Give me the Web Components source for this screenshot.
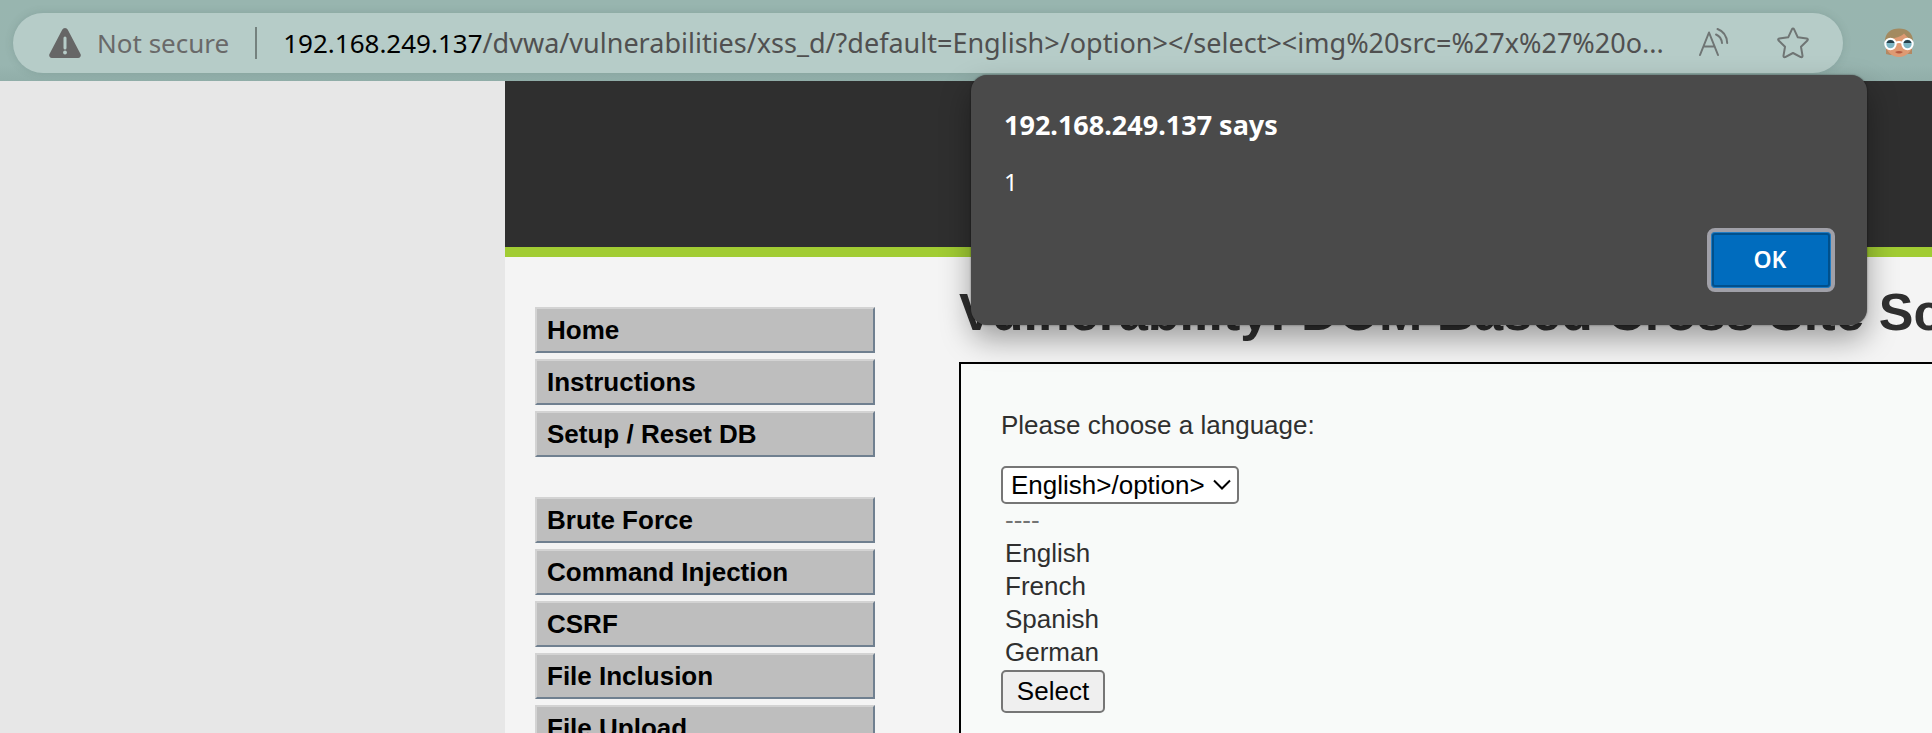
<!DOCTYPE html>
<html lang="en">
<head>
<meta charset="utf-8">
<title>Vulnerability: DOM Based Cross Site Scripting (XSS)</title>
<style>
html, body { height: 100%; }
body { margin: 0; overflow: hidden; background: #e7e7e7; font-family: "Liberation Sans", Arial, sans-serif; font-size: 26px; color: #2f2f2f; }
</style>
</head>
<body>
<browser-window>
  <address-bar slot="bar">
    <span slot="status">Not secure</span>
    <span slot="host">192.168.249.137</span>
    <span slot="path">/dvwa/vulnerabilities/xss_d/?default=English&gt;/option&gt;&lt;/select&gt;&lt;img%20src=%27x%27%20o...</span>
  </address-bar>
  <dvwa-page>
    <nav-group slot="nav">
      <nav-item>Home</nav-item>
      <nav-item>Instructions</nav-item>
      <nav-item>Setup / Reset DB</nav-item>
    </nav-group>
    <nav-group slot="nav">
      <nav-item>Brute Force</nav-item>
      <nav-item>Command Injection</nav-item>
      <nav-item>CSRF</nav-item>
      <nav-item>File Inclusion</nav-item>
      <nav-item>File Upload</nav-item>
    </nav-group>
    <span slot="title">Vulnerability: DOM Based Cross Site Scripting (XSS)</span>
    <language-form></language-form>
  </dvwa-page>
  <alert-box slot="dialog">
    <span slot="title">192.168.249.137 says</span>
    <span>1</span>
  </alert-box>
</browser-window>

<script>
function define(name, html) {
  const template = document.createElement('template');
  template.innerHTML = html;
  customElements.define(name, class extends HTMLElement {
    constructor() {
      super();
      this.attachShadow({ mode: 'open' }).append(template.content.cloneNode(true));
    }
  });
}

define('browser-window', `
<style>
:host { display: flex; flex-direction: column; height: 100%; position: relative; overflow: hidden; }
main { flex: 1; min-height: 0; overflow: hidden; display: flex; }
/* The alert floats over both the toolbar and the page. */
.float { position: absolute; top: 75px; right: 65px; }
</style>
<slot name="bar"></slot>
<main><slot></slot></main>
<div class="float"><slot name="dialog"></slot></div>`);

define('address-bar', `
<style>
:host { display: flex; align-items: center; box-sizing: border-box; flex: none; height: 81px; padding: 5px 17px 0 13px; gap: 40px;
  background: linear-gradient(#98b5af, #98b5b0 80%, #91aea9); font-family: "Noto Sans", sans-serif; font-size: 26px; line-height: 36px; white-space: nowrap; }
.pill { flex: 1; min-width: 0; height: 60px; border-radius: 30px; background: #b6ccc8; display: flex; align-items: center; box-sizing: border-box;
  padding: 0 33px 0 36px; box-shadow: 0 0 8px rgba(60,90,85,.18); }
.status { color: #696969; margin-left: 16px; }
.bar { width: 2px; height: 32px; background: #74817e; margin: 0 26px; }
.url { flex: 1; min-width: 0; overflow: hidden; color: #505050; font-size: 27px; }
.host { color: #000; font-size: 26px; }
button { all: unset; display: block; flex: none; height: 32px; }
svg { display: block; }
.read { margin-right: 46px; }
</style>
<div class="pill">
  <svg width="32" height="32" viewBox="0 0 32 32" aria-hidden="true"><path d="M13.2 2.7a3.1 3.1 0 0 1 5.6 0L31.5 27.1A2.7 2.7 0 0 1 29 31H3a2.7 2.7 0 0 1-2.500-3.900z" fill="#666"/><path d="M16 11v10" stroke="#b6ccc8" stroke-width="3" stroke-linecap="round"/><circle cx="16" cy="25.500" r="1.900" fill="#b6ccc8"/></svg>
  <span class="status"><slot name="status"></slot></span>
  <span class="bar"></span>
  <div class="url" role="textbox" aria-label="Address"><span class="host"><slot name="host"></slot></span><slot name="path"></slot></div>
  <button class="read" aria-label="Read aloud"><svg width="32" height="32" viewBox="0 0 32 32" fill="none" stroke="#6f7574" stroke-width="2" stroke-linecap="round" stroke-linejoin="round"><path d="M2 28 11 5.500 20 28M5.500 19.500h11.200M18 7.500c3.300 1.300 5.500 4.300 6 8.500M19.500 2c5.600 2 9.300 7.300 9.700 14"/></svg></button>
  <button aria-label="Add to favorites"><svg width="34" height="32" viewBox="0 0 34 32" fill="none" stroke="#6f7574" stroke-width="2" stroke-linejoin="round"><path d="M15.900 2.300q1.100-1.800 2.200 0l3.700 8 8.900 1.200q1.900.5.700 2l-6.400 6.300 1.500 8.800q.1 2-1.700 1.500L17 26l-7.800 4.100q-1.800.5-1.700-1.500L9 19.800l-6.400-6.300q-1.200-1.500.7-2l8.900-1.200z"/></svg></button>
</div>
<button aria-label="Profile"><svg width="32" height="32" viewBox="0 0 32 32">
  <path d="M3 14h26v13h-4l-18 1-4-1z" fill="#b38862"/>
  <circle cx="16" cy="16.500" r="13.500" fill="#de9a73"/>
  <path d="M2 14C2 6 8 1.500 16 1.500S30 6 30 14l-4-2-5-5.500C18 10 11 11 8 12z" fill="#a38a60"/>
  <path d="M12 25q4-2 8 0-4 3-8 0" fill="#b5593f"/>
  <circle cx="7.500" cy="17" r="5.200" fill="#7cb5c4" stroke="#fff" stroke-width="2"/><circle cx="24.500" cy="17" r="5.200" fill="#7cb5c4" stroke="#fff" stroke-width="2"/>
  <path d="M3.500 16a4.200 4.200 0 0 1 8 0zM20.500 16a4.200 4.200 0 0 1 8 0z" fill="#263f4a"/>
  <path d="M12.500 16q3.500-2 7 0" fill="none" stroke="#fff" stroke-width="2"/></svg></button>`);

define('dvwa-page', `
<style>
:host { display: block; flex: 1; min-width: 0; margin-left: 505px; background: #f4f4f4; }
header { height: 166px; background: #2f2f2f; border-bottom: 10px solid #a1cc33; }
.columns { display: flex; }
nav { flex: none; width: 340px; padding: 50px 30px 0; display: flex; flex-direction: column; gap: 40px; }
section { flex: 1; min-width: 0; margin-left: 54px; padding-top: 25px; }
h1 { margin: 0 0 20px; font-size: 52px; line-height: 60px; white-space: nowrap; overflow: hidden; }
.panel { border: 2px solid #000; border-right: 0; background: #f8faf9; padding: 46px 40px; height: 400px; }
</style>
<header></header>
<div class="columns">
  <nav><slot name="nav"></slot></nav>
  <section><h1><slot name="title"></slot></h1><div class="panel"><slot></slot></div></section>
</div>`);

define('nav-group', `
<style>:host { display: flex; flex-direction: column; gap: 6px; }</style><slot></slot>`);

define('nav-item', `
<style>
:host { display: block; }
a { display: block; height: 42px; line-height: 42px; padding-left: 10px; border: 2px solid; border-color: #d3d3d3 #708090 #708090 #d3d3d3;
  background: #bebebe; color: #000; font-weight: bold; text-decoration: none; }
</style><a href="#"><slot></slot></a>`);

define('language-form', `
<style>
:host { display: block; }
label { display: block; line-height: 30px; margin-bottom: 26px; }
.pick { display: inline-grid; vertical-align: top; width: 238px; }
select, svg { grid-area: 1 / 1; }
select { appearance: none; box-sizing: border-box; width: 100%; height: 38px; margin: 0; padding: 0 8px; border: 2px solid #767676; border-radius: 5px; background: #fff; color: #000; font: inherit; }
svg { justify-self: end; align-self: center; margin-right: 8px; pointer-events: none; }
ul { list-style: none; margin: 0; padding: 0 4px 1px; line-height: 33px; }
li:first-child { color: #737373; }
button { display: block; box-sizing: border-box; width: 104px; height: 43px; padding: 0; border: 2px solid #767676; border-radius: 5px; background: #efefef; color: #000; font: inherit; }
</style>
<form onsubmit="return false">
  <label for="lang">Please choose a language:</label>
  <div class="pick">
    <select id="lang"><option>English&gt;/option&gt;</option></select>
    <svg width="18" height="12" viewBox="0 0 18 12" fill="none" stroke="#000" stroke-width="2"><path d="m1 1.500 8 8 8-8"/></svg>
  </div>
  <ul><li>----</li><li>English</li><li>French</li><li>Spanish</li><li>German</li></ul>
  <button>Select</button>
</form>`);

define('alert-box', `
<style>
:host { display: flex; flex-direction: column; box-sizing: border-box; width: 896px; height: 250px; padding: 32px 32px 33px 33px; border-radius: 16px; background: #4a4a4a; color: #fff;
  font-family: "Noto Sans", sans-serif; font-size: 24px; line-height: 36px; box-shadow: 0 0 2px rgba(0,0,0,.5), 0 14px 30px rgba(0,0,0,.36); }
h2 { margin: 0 0 21px; font-size: 27px; line-height: 36px; font-weight: bold; }
p { margin: 0; }
button { margin-top: auto; align-self: flex-end; box-sizing: border-box; width: 128px; height: 64px; flex: none; padding: 0 2px 2px 0; border: 4px solid #a0a0a8; border-radius: 8px;
  background: #006cbe; color: #fff; font: 600 23px "Noto Sans", sans-serif; box-shadow: inset 0 0 0 1px #1f7cc4, inset 0 0 0 3px #00508c; }
</style>
<h2><slot name="title"></slot></h2>
<p><slot></slot></p>
<button>OK</button>`);
</script>
</body>
</html>
